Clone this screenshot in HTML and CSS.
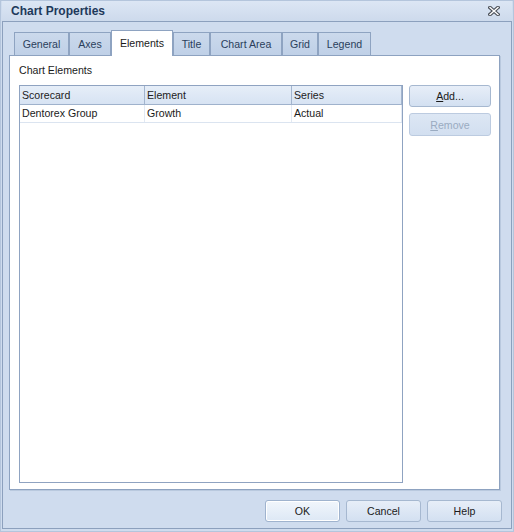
FILE: index.html
```html
<!DOCTYPE html>
<html lang="en">
<head>
  <meta charset="UTF-8" />
  <title>Chart Properties</title>
  <link rel="stylesheet" href="styles.css">
</head>
<body>
  <div class="window">
    <div class="titlebar">
      <span class="title">Chart Properties</span>
      <svg class="close" width="12" height="10" viewBox="0 0 12 10" aria-label="Close">
        <path d="M2 1.5 L10 8.5 M10 1.5 L2 8.5" stroke="#4a4f58" stroke-width="3.6" stroke-linecap="square" fill="none"/>
        <path d="M2 1.5 L10 8.5 M10 1.5 L2 8.5" stroke="#ffffff" stroke-width="1.4" stroke-linecap="square" fill="none"/>
      </svg>
    </div>

    <div class="frame">
      <!-- tab strip -->
      <div class="tabs">
        <div class="tab">General</div>
        <div class="tab">Axes</div>
        <div class="tab active">Elements</div>
        <div class="tab">Title</div>
        <div class="tab">Chart Area</div>
        <div class="tab">Grid</div>
        <div class="tab">Legend</div>
      </div>

      <div class="panel">
        <div class="label">Chart Elements</div>
        <div class="panel-body">
          <div class="grid">
            <div class="grid-row header">
              <div class="cell">Scorecard</div>
              <div class="cell">Element</div>
              <div class="cell">Series</div>
            </div>
            <div class="grid-row">
              <div class="cell">Dentorex Group</div>
              <div class="cell">Growth</div>
              <div class="cell">Actual</div>
            </div>
          </div>
          <div class="side-buttons">
            <button class="btn"><u>A</u>dd...</button>
            <button class="btn" disabled><u>R</u>emove</button>
          </div>
        </div>
      </div>

      <div class="footer">
        <button class="btn wide default">OK</button>
        <button class="btn wide">Cancel</button>
        <button class="btn wide">Help</button>
      </div>
    </div>
  </div>
</body>
</html>
```

FILE: styles.css
```css
body {
  margin: 0;
  font-family: "Liberation Sans", Arial, sans-serif;
  font-size: 10.6px;
  color: #1a1a1a;
}

.window {
  width: 514px;
  height: 532px;
  box-sizing: border-box;
  border: 1px solid #b4c5dc;
  padding: 0 1px 2px 1px;
  background: #cfdcee;
}

.titlebar {
  height: 20px;
  display: flex;
  align-items: center;
  justify-content: space-between;
  padding: 0 12px 0 9px;
  background: linear-gradient(#dce6f4, #cddaec);
}

.title {
  font-size: 12px;
  font-weight: bold;
  color: #1e395b;
}

.close {
  display: block;
}

.frame {
  height: 508px;
  box-sizing: border-box;
  border: 1px solid #8ca0bd;
  padding-top: 8px;
  background: #cfdcee;
}

/* tabs */
.tabs {
  display: flex;
  align-items: flex-end;
  height: 25px;
  margin-left: 11px;
}

.tab {
  height: 23px;
  box-sizing: border-box;
  border: 1px solid #8ea3c1;
  border-bottom: none;
  background: linear-gradient(#cbd9ec, #bfd0e7);
  color: #2b3f5c;
  text-align: center;
  line-height: 23px;
}

.tab:nth-child(1) { width: 55px; }
.tab:nth-child(2) { width: 42px; }
.tab:nth-child(3) { width: 62px; }
.tab:nth-child(4) { width: 37px; }
.tab:nth-child(5) { width: 72px; }
.tab:nth-child(6) { width: 36px; }
.tab:nth-child(7) { width: 53px; }

.tab.active {
  height: 26px;
  margin-bottom: -1px;
  line-height: 24px;
  background: #ffffff;
  color: #1a1a1a;
  position: relative;
  z-index: 1;
}

/* page */
.panel {
  width: 491px;
  height: 435px;
  box-sizing: border-box;
  margin-left: 6px;
  border: 1px solid #8da2c0;
  box-shadow: 1px 1px 0 #b9c9de;
  background: #ffffff;
  padding: 7px 8px 6px 9px;
}

.label {
  height: 14px;
  line-height: 14px;
  margin-bottom: 8px;
}

.panel-body {
  display: flex;
  gap: 6px;
}

.grid {
  width: 384px;
  height: 398px;
  box-sizing: border-box;
  border: 1px solid #8fa3c1;
}

.grid-row {
  display: grid;
  grid-template-columns: 125px 147px 110px;
  height: 18px;
  box-sizing: border-box;
  border-bottom: 1px solid #dbe4f0;
}

.grid-row .cell {
  padding-left: 2px;
  line-height: 17px;
  border-right: 1px solid #e2e9f3;
  white-space: nowrap;
}

.grid-row.header {
  height: 19px;
  background: linear-gradient(#e6eef8, #d7e3f3);
  border-bottom: 1px solid #9fb2cc;
}

.grid-row.header .cell {
  line-height: 18px;
  border-right-color: #a3b5ce;
  color: #222;
}

.side-buttons {
  display: flex;
  flex-direction: column;
  gap: 6px;
}

/* buttons */
.btn {
  width: 82px;
  height: 22px;
  padding: 0;
  font-family: inherit;
  font-size: inherit;
  color: #1a1a1a;
  border: 1px solid #a6b8d0;
  border-radius: 3px;
  background: linear-gradient(#e7eef8, #d3e0f1);
}

.side-buttons .btn:disabled {
  height: 23px;
  color: #9aabc1;
  border-color: #bccbe0;
  background: linear-gradient(#dde7f4, #d2dff0);
}

.footer {
  display: flex;
  justify-content: flex-end;
  gap: 6px;
  margin-top: 10px;
  padding-right: 9px;
}

.btn.wide {
  width: 75px;
}

.btn.default {
  background: linear-gradient(#f1f6fc, #dde8f5);
  border-color: #9fb3ce;
  box-shadow: inset 0 0 0 1px #ffffff;
}
```
